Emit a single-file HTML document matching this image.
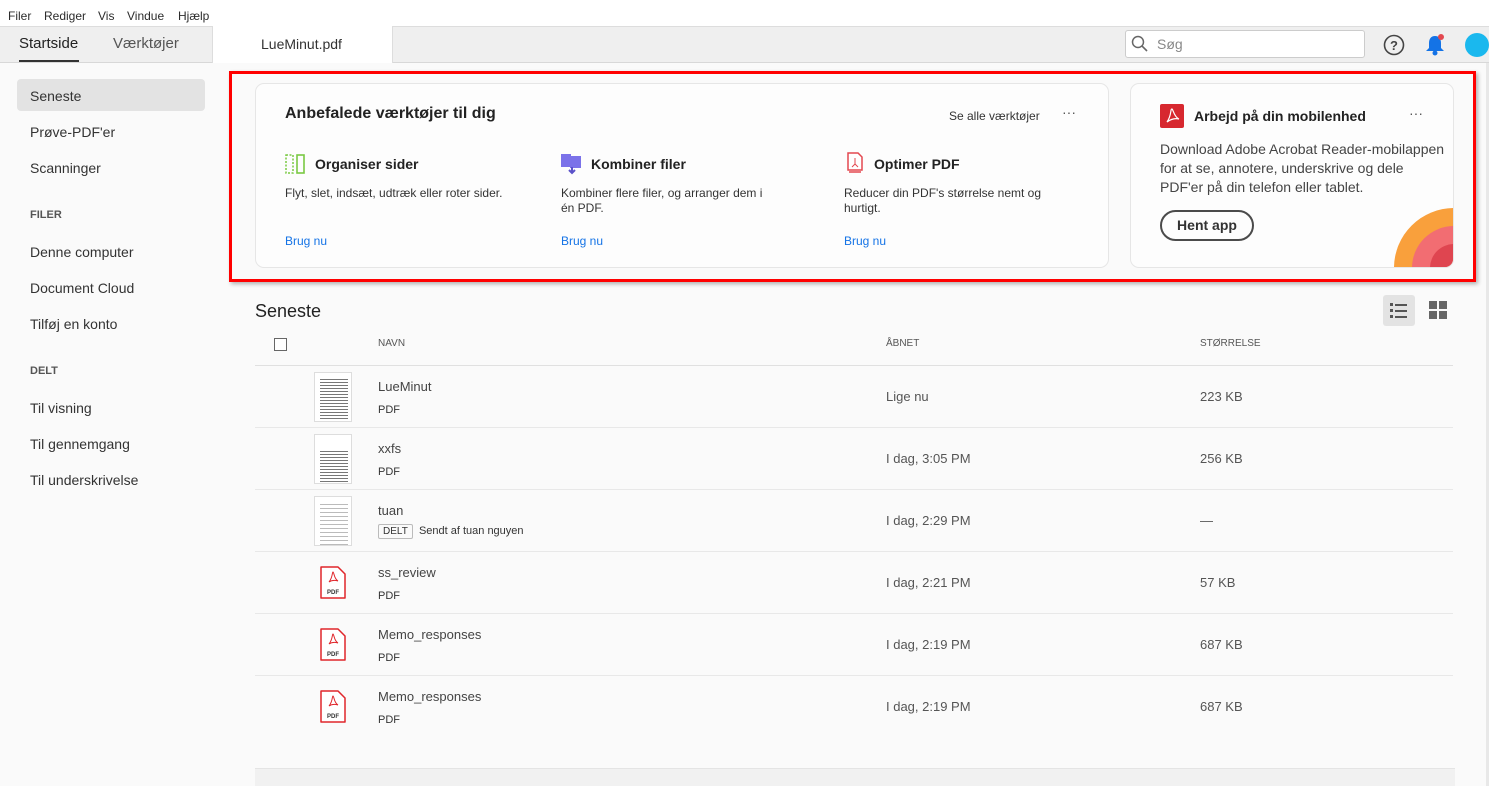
<!DOCTYPE html>
<html><head><meta charset="utf-8"><style>
*{box-sizing:border-box;margin:0;padding:0}
body{width:1489px;height:786px;overflow:hidden;background:#fafafa;font-family:"Liberation Sans",sans-serif;color:#2c2c2c;position:relative}
.abs{position:absolute}
.menu{top:0;left:0;width:1489px;height:26px;background:#fff;font-size:12px}
.menu span{position:absolute;top:9px}
.tabs{top:26px;left:0;width:1489px;height:37px;background:#efefef;border-top:1px solid #ddd;border-bottom:1px solid #d8d8d8}
.side{font-size:14px;color:#333}
.side div{position:absolute;left:30px}
.card{background:#fdfdfd;border:1px solid #e6e6e6;border-radius:9px}
.link{color:#1473e6;font-size:12px}
.row{left:255px;width:1198px;height:62px;border-bottom:1px solid #e8e8e8}
.row .nm{position:absolute;left:123px;top:13px;font-size:13px;color:#444}
.row .ty{position:absolute;left:123px;top:38px;font-size:11px;color:#333}
.row .dt{position:absolute;left:631px;top:23px;font-size:13px;color:#555}
.row .sz{position:absolute;left:945px;top:23px;font-size:13px;color:#555}
.thumb{position:absolute;left:59px;top:6px;width:38px;height:50px;background:#fff;border:1px solid #ddd;background-image:repeating-linear-gradient(#fff 0 2px,#777 2px 3px);background-size:28px 100%;background-repeat:no-repeat;background-position:5px 4px}
.pdf{position:absolute;left:65px;top:14px}
</style></head><body>
<div class="abs menu"><span style="left:8px">Filer</span><span style="left:44px">Rediger</span><span style="left:98px">Vis</span><span style="left:127px">Vindue</span><span style="left:178px">Hjælp</span></div>
<div class="abs tabs">
 <div class="abs" style="left:19px;top:8px;font-size:15px;color:#222">Startside</div>
 <div class="abs" style="left:19px;top:33px;width:60px;height:2px;background:#333"></div>
 <div class="abs" style="left:113px;top:8px;font-size:15px;color:#555">Værktøjer</div>
 <div class="abs" style="left:212px;top:-1px;width:181px;height:37px;background:#fff;border-left:1px solid #ddd;border-right:1px solid #ddd"></div>
 <div class="abs" style="left:261px;top:9px;font-size:14px;color:#333">LueMinut.pdf</div>
 <div class="abs" style="left:1125px;top:3px;width:240px;height:28px;background:#fff;border:1px solid #ccc;border-radius:3px"></div>
 <svg class="abs" style="left:1131px;top:8px" width="18" height="18"><circle cx="7" cy="7" r="5.5" fill="none" stroke="#666" stroke-width="1.5"/><line x1="11" y1="11" x2="16" y2="16" stroke="#666" stroke-width="1.6"/></svg>
 <div class="abs" style="left:1157px;top:9px;font-size:14px;color:#888">Søg</div>
 <svg class="abs" style="left:1383px;top:7px" width="22" height="22"><circle cx="11" cy="11" r="9.5" fill="none" stroke="#444" stroke-width="1.6"/><text x="11" y="16" font-size="13" font-weight="bold" text-anchor="middle" fill="#444" font-family="Liberation Sans">?</text></svg>
 <svg class="abs" style="left:1424px;top:6px" width="22" height="24"><path d="M11 3c-4 0-6 3-6 7v5l-3 3h18l-3-3v-5c0-4-2-7-6-7z" fill="#1473e6"/><circle cx="11" cy="20" r="2.5" fill="#1473e6"/><circle cx="17" cy="4" r="3" fill="#e34850"/></svg>
 <div class="abs" style="left:1465px;top:6px;width:24px;height:24px;border-radius:50%;background:#1ab8ee"></div>
</div>
<div class="abs side" style="top:63px;left:0;width:225px;height:723px">
 <div style="left:17px;top:16px;width:188px;height:32px;background:#e3e3e3;border-radius:4px"></div>
 <div style="top:25px">Seneste</div>
 <div style="top:61px">Prøve-PDF'er</div>
 <div style="top:97px">Scanninger</div>
 <div style="top:146px;font-size:11px;font-weight:bold;color:#555">FILER</div>
 <div style="top:181px">Denne computer</div>
 <div style="top:217px">Document Cloud</div>
 <div style="top:253px">Tilføj en konto</div>
 <div style="top:302px;font-size:11px;font-weight:bold;color:#555">DELT</div>
 <div style="top:337px">Til visning</div>
 <div style="top:373px">Til gennemgang</div>
 <div style="top:409px">Til underskrivelse</div>
</div>
<div class="abs" style="left:229px;top:71px;width:1247px;height:211px;border:3px solid #f00;box-shadow:2px 2px 4px rgba(0,0,0,.3)"></div>
<div class="abs card" style="left:255px;top:83px;width:854px;height:185px">
 <div class="abs" style="left:29px;top:21px;font-size:16px;font-weight:bold;color:#222">Anbefalede værktøjer til dig</div>
 <div class="abs" style="left:693px;top:25px;font-size:12px;color:#333">Se alle værktøjer</div>
 <div class="abs" style="left:806px;top:20px;font-size:14px;color:#555">···</div>
 <svg class="abs" style="left:29px;top:70px" width="20" height="20"><rect x="1" y="1" width="7" height="18" fill="none" stroke="#7ac943" stroke-width="1.5" stroke-dasharray="2 1.5"/><rect x="12" y="1" width="7" height="18" fill="none" stroke="#7ac943" stroke-width="1.6"/></svg>
 <div class="abs" style="left:59px;top:72px;font-size:14px;font-weight:bold;color:#222">Organiser sider</div>
 <div class="abs" style="left:29px;top:102px;font-size:12px;color:#333">Flyt, slet, indsæt, udtræk eller roter sider.</div>
 <div class="abs link" style="left:29px;top:150px">Brug nu</div>
 <svg class="abs" style="left:305px;top:69px" width="22" height="22"><rect x="0" y="1" width="10" height="13" fill="#7b72e9"/><rect x="9" y="3" width="11" height="12" fill="#7b72e9"/><path d="M11 14v6m-3-3l3 3 3-3" stroke="#5b52c9" stroke-width="2" fill="none"/></svg>
 <div class="abs" style="left:335px;top:72px;font-size:14px;font-weight:bold;color:#222">Kombiner filer</div>
 <div class="abs" style="left:305px;top:102px;font-size:12px;color:#333;line-height:15px">Kombiner flere filer, og arranger dem i<br>én PDF.</div>
 <div class="abs link" style="left:305px;top:150px">Brug nu</div>
 <svg class="abs" style="left:590px;top:68px" width="18" height="22"><path d="M2 1h10l4 4v13H2z" fill="#fff" stroke="#e34850" stroke-width="1.5"/><path d="M3 20h12" stroke="#e34850" stroke-width="1.5"/><path d="M9 6v6l-3 3m3-3l3 3" stroke="#e34850" stroke-width="1" fill="none"/></svg>
 <div class="abs" style="left:618px;top:72px;font-size:14px;font-weight:bold;color:#222">Optimer PDF</div>
 <div class="abs" style="left:588px;top:102px;font-size:12px;color:#333;line-height:15px">Reducer din PDF's størrelse nemt og<br>hurtigt.</div>
 <div class="abs link" style="left:588px;top:150px">Brug nu</div>
</div>
<div class="abs card" style="left:1130px;top:83px;width:324px;height:185px;overflow:hidden">
 <div class="abs" style="left:29px;top:20px;width:24px;height:24px;background:#d7282f;border-radius:2px"></div>
 <svg class="abs" style="left:31px;top:22px" width="20" height="20"><path d="M10 3c-2 0 0 6-5 13 4-3 8-4 12-3-5-2-6-10-7-10z" fill="none" stroke="#fff" stroke-width="1.2"/></svg>
 <div class="abs" style="left:63px;top:24px;font-size:14px;font-weight:bold;color:#222">Arbejd på din mobilenhed</div>
 <div class="abs" style="left:278px;top:21px;font-size:14px;color:#555">···</div>
 <div class="abs" style="left:29px;top:56px;font-size:14px;color:#444;line-height:19px">Download Adobe Acrobat Reader-mobilappen<br>for at se, annotere, underskrive og dele<br>PDF'er på din telefon eller tablet.</div>
 <div class="abs" style="left:29px;top:126px;width:94px;height:31px;border:2px solid #4b4b4b;border-radius:16px;font-size:14px;font-weight:bold;color:#333;text-align:center;line-height:27px">Hent app</div>
 <div class="abs" style="left:263px;top:124px;width:120px;height:120px;border-radius:50%;background:#f9a03c"></div>
 <div class="abs" style="left:281px;top:142px;width:84px;height:84px;border-radius:50%;background:#f26d72"></div>
 <div class="abs" style="left:299px;top:160px;width:48px;height:48px;border-radius:50%;background:#df4550"></div>
</div>
<div class="abs" style="left:255px;top:301px;font-size:18px;color:#222">Seneste</div>
<div class="abs" style="left:1383px;top:295px;width:32px;height:31px;background:#e3e3e3;border-radius:3px"></div>
<svg class="abs" style="left:1389px;top:301px" width="20" height="20"><g fill="#555"><rect x="1" y="2" width="3" height="3"/><rect x="6" y="3" width="12" height="2"/><rect x="1" y="8" width="3" height="3"/><rect x="6" y="9" width="12" height="2"/><rect x="1" y="14" width="3" height="3"/><rect x="6" y="15" width="12" height="2"/></g></svg>
<svg class="abs" style="left:1429px;top:301px" width="18" height="18"><g fill="#666"><rect x="0" y="0" width="8" height="8"/><rect x="10" y="0" width="8" height="8"/><rect x="0" y="10" width="8" height="8"/><rect x="10" y="10" width="8" height="8"/></g></svg>
<div class="abs" style="left:255px;top:330px;width:1198px;height:36px;border-bottom:1px solid #e0e0e0;font-size:10px;color:#555">
 <div class="abs" style="left:19px;top:8px;width:13px;height:13px;border:1px solid #666;background:#fff"></div>
 <div class="abs" style="left:123px;top:8px">NAVN</div>
 <div class="abs" style="left:631px;top:8px">ÅBNET</div>
 <div class="abs" style="left:945px;top:8px">STØRRELSE</div>
</div>
<div class="abs row" style="top:366px"><div class="thumb"></div><div class="nm">LueMinut</div><div class="ty">PDF</div><div class="dt">Lige nu</div><div class="sz">223 KB</div></div>
<div class="abs row" style="top:428px"><div class="thumb" style="background-position:5px 14px"></div><div class="nm">xxfs</div><div class="ty">PDF</div><div class="dt">I dag, 3:05 PM</div><div class="sz">256 KB</div></div>
<div class="abs row" style="top:490px"><div class="thumb" style="background-image:repeating-linear-gradient(#fff 0 3px,#bbb 3px 4px)"></div><div class="nm">tuan</div><div class="ty" style="top:35px"><span style="border:1px solid #bbb;border-radius:2px;padding:1px 4px;font-size:10px">DELT</span>&nbsp; Sendt af tuan nguyen</div><div class="dt">I dag, 2:29 PM</div><div class="sz">—</div></div>
<svg width="0" height="0" style="position:absolute"><defs><g id="p"><path d="M1 1h17l7 7v24H1z" fill="#fff" stroke="#e0262b" stroke-width="1.5" stroke-linejoin="round"/><path d="M13 6c-1 0 0 5-4 10 3-2 6-2 9-1-4-2-4-9-5-9z" fill="none" stroke="#e0262b" stroke-width="1"/><text x="13" y="28" font-size="6" font-weight="bold" text-anchor="middle" fill="#333" font-family="Liberation Sans">PDF</text></g></defs></svg>
<div class="abs row" style="top:552px"><svg class="pdf" width="27" height="34"><use href="#p"/></svg><div class="nm">ss_review</div><div class="ty">PDF</div><div class="dt">I dag, 2:21 PM</div><div class="sz">57 KB</div></div>
<div class="abs row" style="top:614px"><svg class="pdf" width="27" height="34"><use href="#p"/></svg><div class="nm">Memo_responses</div><div class="ty">PDF</div><div class="dt">I dag, 2:19 PM</div><div class="sz">687 KB</div></div>
<div class="abs row" style="top:676px;border:none"><svg class="pdf" width="27" height="34"><use href="#p"/></svg><div class="nm">Memo_responses</div><div class="ty">PDF</div><div class="dt">I dag, 2:19 PM</div><div class="sz">687 KB</div></div>
<div class="abs" style="left:255px;top:768px;width:1200px;height:18px;background:#f1f1f1;border-top:1px solid #e4e4e4"></div>
<div class="abs" style="left:1486px;top:63px;width:3px;height:723px;background:#e8e8e8"></div>
</body></html>
